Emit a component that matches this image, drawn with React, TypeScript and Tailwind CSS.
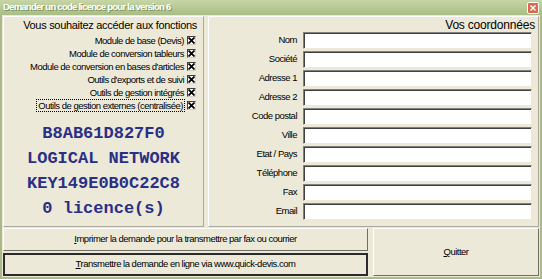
const features = [
  'Module de base (Devis)',
  'Module de conversion tableurs',
  "Module de conversion en bases d'articles",
  "Outils d'exports et de suivi",
  'Outils de gestion intégrés',
  'Outils de gestion externes (centralisée)',
];

const fields = ['Nom', 'Société', 'Adresse 1', 'Adresse 2', 'Code postal', 'Ville', 'Etat / Pays', 'Téléphone', 'Fax', 'Email'];

function CheckBox() {
  return (
    <span className="w-[9px] h-[9px] border border-t-[#404040] border-l-[#404040] border-b-[#d4d0c8] border-r-[#d4d0c8] bg-white flex items-center justify-center shrink-0">
      <svg width="7" height="7" viewBox="0 0 7 7">
        <path d="M0.5 0.5L6.5 6.5M6.5 0.5L0.5 6.5" stroke="#000" strokeWidth="1.8" />
      </svg>
    </span>
  );
}

export default function App() {
  return (
    <div className="w-[542px] h-[279px] bg-[#a9b98a] font-['Liberation_Sans',sans-serif] text-[9.5px] tracking-[-0.5px] text-black overflow-hidden flex flex-col">
      {/* Title bar */}
      <div className="h-[16px] flex items-center justify-between pl-[3px] pr-[3px] bg-gradient-to-b from-[#c6d6a6] to-[#a9bd86]">
        <span className="text-white font-bold text-[9.5px] tracking-[-0.75px] whitespace-nowrap [text-shadow:1px_1px_0_#7f9460]">
          Demander un code licence pour la version 6
        </span>
        <span className="w-[12px] h-[12px] rounded-[2px] bg-[#d86a52] border border-white flex items-center justify-center">
          <svg width="6" height="6" viewBox="0 0 6 6">
            <path d="M0.5 0.5L5.5 5.5M5.5 0.5L0.5 5.5" stroke="white" strokeWidth="1.4" />
          </svg>
        </span>
      </div>

      {/* Body */}
      <div className="flex-1 mx-[2px] mb-[2px] bg-[#ece9d8] flex flex-col p-[1px]">
        <div className="flex gap-[4px] h-[211px]">
          {/* Left panel */}
          <div className="w-[201px] border border-t-white border-l-white border-b-[#aca899] border-r-[#aca899] flex flex-col">
            <div className="text-[11px] tracking-[-0.3px] whitespace-nowrap text-right pr-[6px] pt-[1px] leading-[14px]">
              Vous souhaitez accéder aux fonctions
            </div>
            <div className="flex flex-col items-end pr-[7px] pt-[3px] gap-[2px]">
              {features.map((f, i) => (
                <div key={f} className="flex items-center gap-[2px] h-[11px]">
                  <span
                    className={
                      'whitespace-nowrap leading-[11px] px-[1px] ' +
                      (i === 5 ? 'border border-dotted border-black' : '')
                    }
                  >
                    {f}
                  </span>
                  <CheckBox />
                </div>
              ))}
            </div>
            <div className="flex flex-col items-center mt-[13px] gap-[6px] font-['Liberation_Mono',monospace] text-[17px] tracking-normal leading-[19px] text-[#2a2f86] font-semibold">
              <span>B8AB61D827F0</span>
              <span>LOGICAL NETWORK</span>
              <span>KEY149E0B0C22C8</span>
              <span>0 licence(s)</span>
            </div>
          </div>

          {/* Right panel */}
          <div className="flex-1 border border-t-white border-l-white border-b-[#aca899] border-r-[#aca899] flex flex-col">
            <div className="text-[12px] tracking-[-0.2px] whitespace-nowrap text-right pr-[3px] pt-[1px] leading-[14px]">
              Vos coordonnées
            </div>
            <div className="flex flex-col gap-[2px]">
              {fields.map((f) => (
                <div key={f} className="flex items-center h-[17px]">
                  <span className="w-[94px] text-right whitespace-nowrap pr-[6px]">{f}</span>
                  <div className="w-[229px] h-[17px] bg-white border border-t-[#808080] border-l-[#808080] border-b-[#ece9d8] border-r-[#ece9d8] shadow-[inset_1px_1px_0_#404040]" />
                </div>
              ))}
            </div>
          </div>
        </div>

        {/* Buttons */}
        <div className="flex gap-[5px] mt-[1px] flex-1">
          <div className="w-[365px] flex flex-col gap-[2px]">
            <button className="h-[23px] bg-[#ece9d8] border border-t-white border-l-white border-b-[#716f64] border-r-[#716f64] whitespace-nowrap">
              <u>I</u>mprimer la demande pour la transmettre par fax ou courrier
            </button>
            <button className="h-[23px] bg-[#ece9d8] border-2 border-[#2b2b2b] whitespace-nowrap">
              <u>T</u>ransmettre la demande en ligne via www.quick-devis.com
            </button>
          </div>
          <button className="flex-1 bg-[#ece9d8] border border-t-white border-l-white border-b-[#716f64] border-r-[#716f64]">
            <u>Q</u>uitter
          </button>
        </div>
      </div>
    </div>
  );
}
